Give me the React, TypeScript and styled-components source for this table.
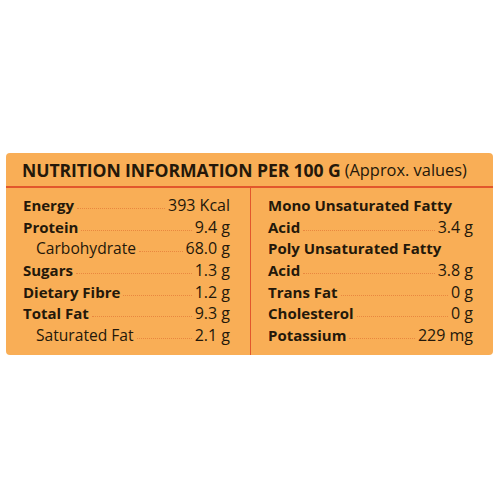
import React from "react";
import styled, { createGlobalStyle } from "styled-components";

const Global = createGlobalStyle`
  html, body { margin: 0; padding: 0; background: #ffffff; }
  body { font-family: "Open Sans", "Noto Sans", sans-serif; }
`;

const Page = styled.div`
  width: 500px;
  height: 500px;
  padding: 153px 7px 0 6px;
  box-sizing: border-box;
`;

const Card = styled.div`
  height: 202px;
  background: #f9ae56;
  border-radius: 4px;
  color: #24180a;
  display: flex;
  flex-direction: column;
`;

const Header = styled.div`
  height: 33px;
  border-bottom: 2px solid #e2572c;
  display: flex;
  align-items: center;
  padding-left: 16px;
  white-space: nowrap;
`;

const Title = styled.span`
  font-weight: 700;
  font-size: 17.6px;
  letter-spacing: -0.1px;
`;

const Note = styled.span`
  font-size: 16.4px;
  margin-left: 4px;
`;

const Body = styled.div`
  flex: 1;
  display: grid;
  grid-template-columns: 244px 1fr;
`;

const Column = styled.div<{ $divider?: boolean }>`
  padding: 7px 20px 0 17px;
  border-left: ${(p) => (p.$divider ? "1.5px solid #e2572c" : "none")};
`;

const Row = styled.div`
  height: 21.7px;
  display: flex;
  align-items: baseline;
  font-size: 15px;
  line-height: 21.7px;
  white-space: nowrap;
`;

const Label = styled.span<{ $sub?: boolean }>`
  font-weight: ${(p) => (p.$sub ? 400 : 700)};
  font-size: ${(p) => (p.$sub ? "15.6px" : "15px")};
  padding-left: ${(p) => (p.$sub ? "13px" : "0")};
`;

const Leader = styled.span`
  flex: 1;
  margin: 0 3px;
  border-bottom: 1.5px dotted #e9873f;
  transform: translateY(-2px);
`;

const Value = styled.span`
  font-weight: 400;
  font-size: 16px;
`;

type Item = { label: string; value?: string; sub?: boolean };

const left: Item[] = [
  { label: "Energy", value: "393 Kcal" },
  { label: "Protein", value: "9.4 g" },
  { label: "Carbohydrate", value: "68.0 g", sub: true },
  { label: "Sugars", value: "1.3 g" },
  { label: "Dietary Fibre", value: "1.2 g" },
  { label: "Total Fat", value: "9.3 g" },
  { label: "Saturated Fat", value: "2.1 g", sub: true },
];

const right: Item[] = [
  { label: "Mono Unsaturated Fatty" },
  { label: "Acid", value: "3.4 g" },
  { label: "Poly Unsaturated Fatty" },
  { label: "Acid", value: "3.8 g" },
  { label: "Trans Fat", value: "0 g" },
  { label: "Cholesterol", value: "0 g" },
  { label: "Potassium", value: "229 mg" },
];

const Line = ({ item }: { item: Item }) => (
  <Row>
    <Label $sub={item.sub}>{item.label}</Label>
    {item.value && (
      <>
        <Leader />
        <Value>{item.value}</Value>
      </>
    )}
  </Row>
);

export default function App() {
  return (
    <Page>
      <Global />
      <Card>
        <Header>
          <Title>NUTRITION INFORMATION PER 100 G</Title>
          <Note>(Approx. values)</Note>
        </Header>
        <Body>
          <Column>
            {left.map((it, i) => (
              <Line key={i} item={it} />
            ))}
          </Column>
          <Column $divider>
            {right.map((it, i) => (
              <Line key={i} item={it} />
            ))}
          </Column>
        </Body>
      </Card>
    </Page>
  );
}
